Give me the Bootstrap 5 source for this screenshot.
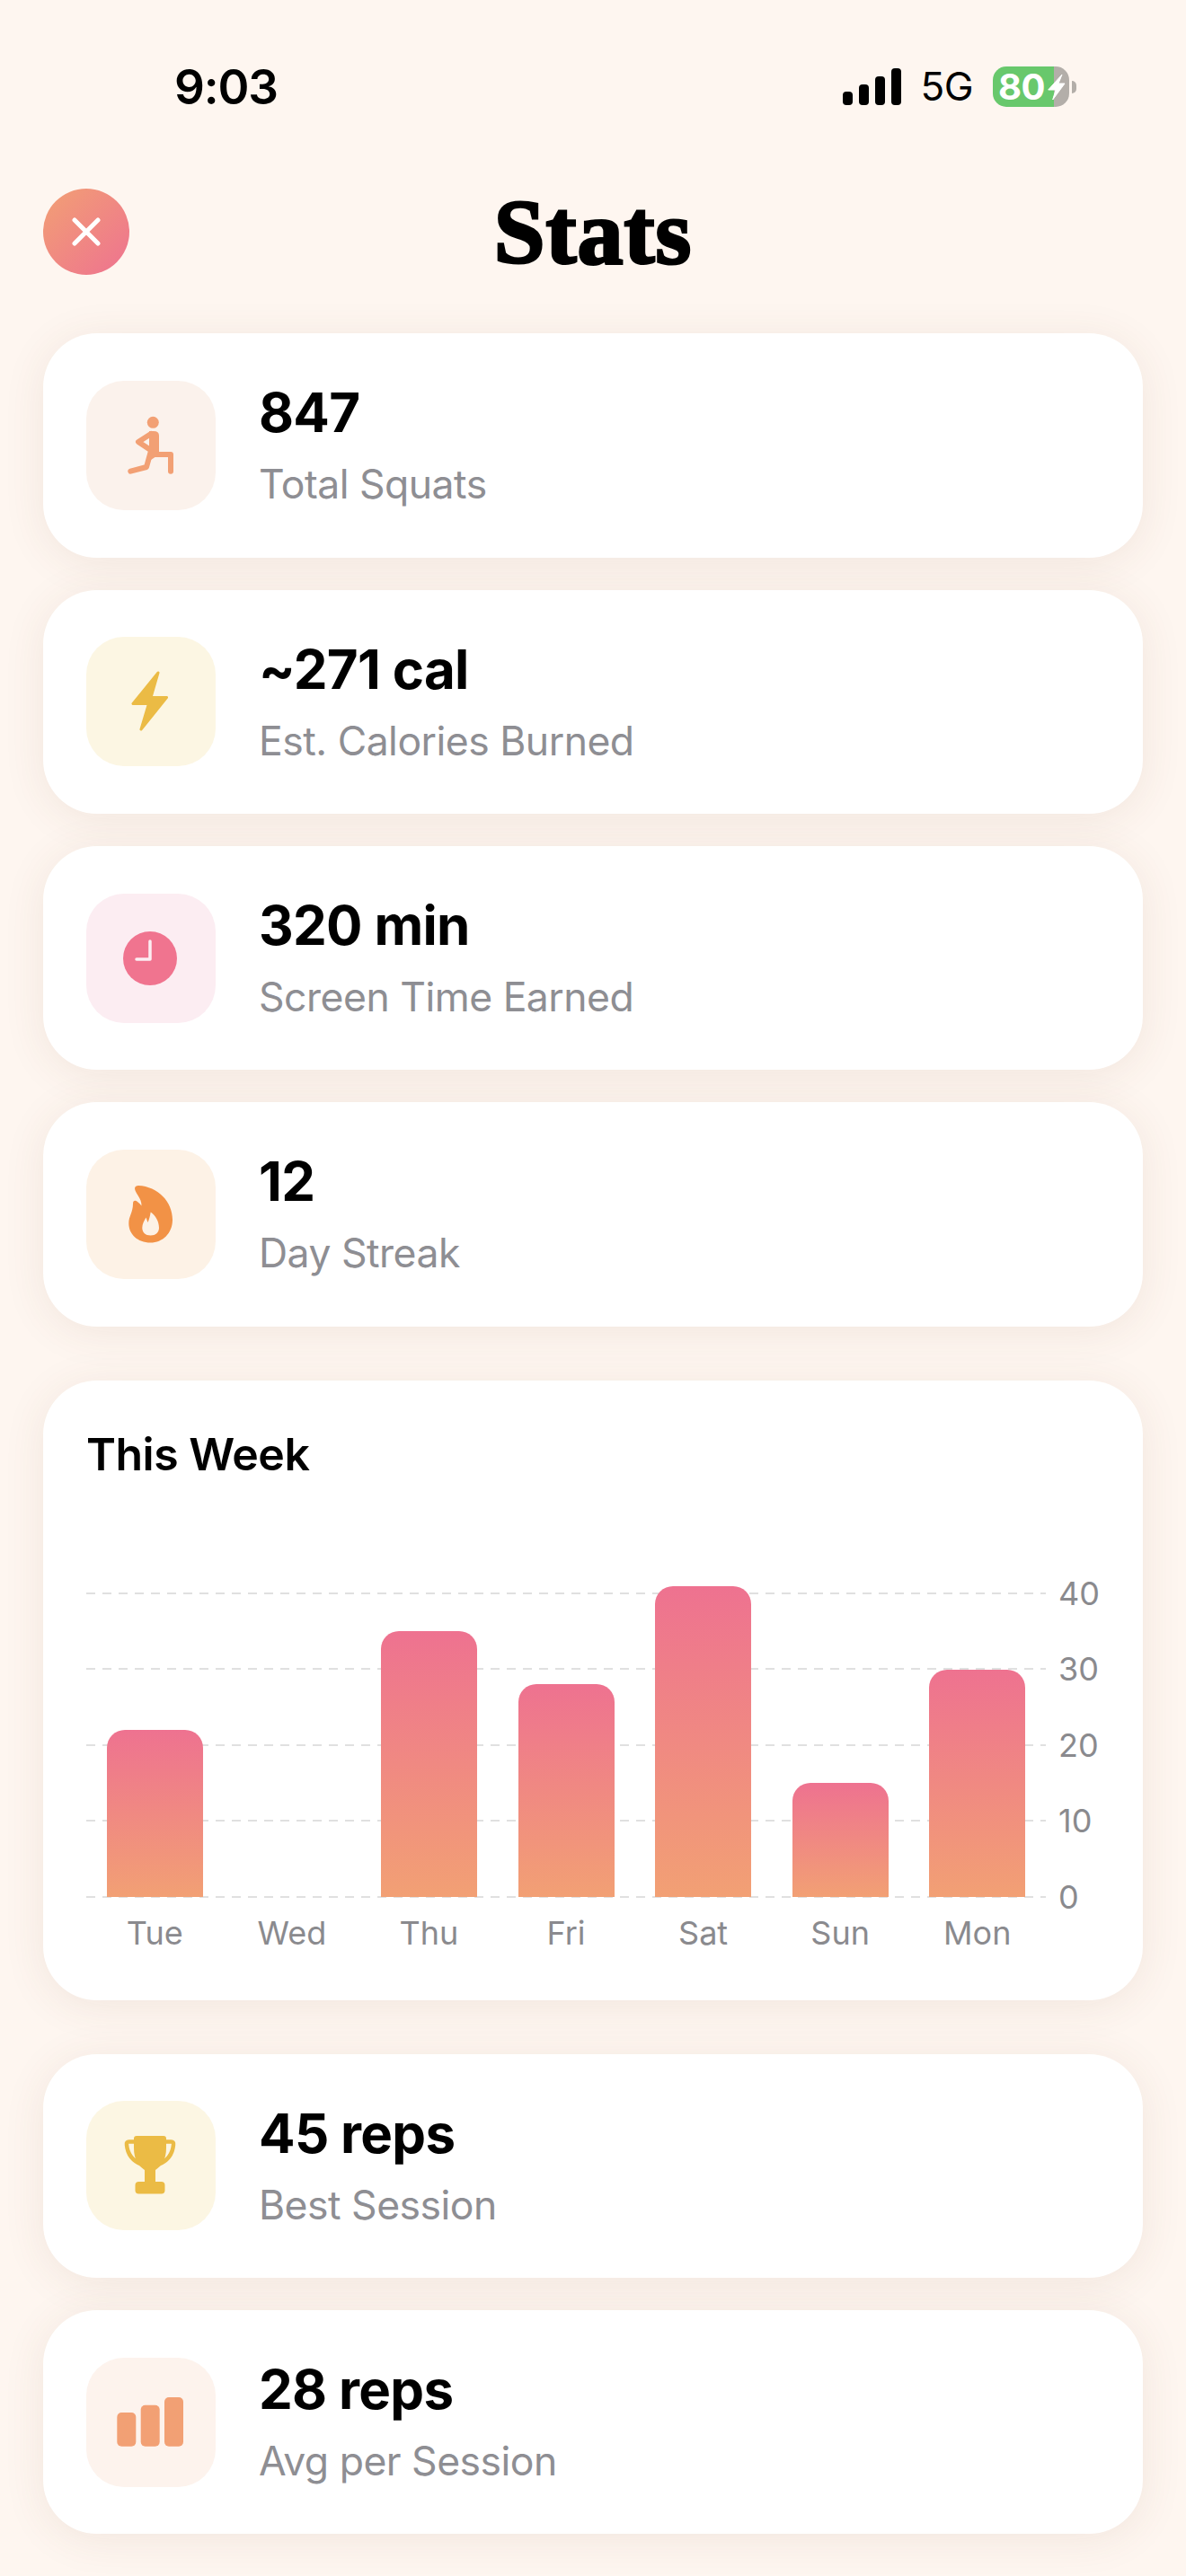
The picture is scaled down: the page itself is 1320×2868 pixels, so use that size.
<!DOCTYPE html>
<html lang="en">
<head>
    <meta charset="UTF-8">
    <meta name="viewport" content="width=device-width, initial-scale=1.0">
    <title>Stats</title>
    <link href="https://cdn.jsdelivr.net/npm/bootstrap@5.3.0/dist/css/bootstrap.min.css" rel="stylesheet">
    <style>
        body { background: #fef6f0; font-family: Inter, "Liberation Sans", sans-serif; color: #000; width: 1320px; min-height: 2868px; }
        .status-row { height: 192px; padding: 74px 122px 0 194px; }
        .status-time { font-size: 53px; font-weight: 600; line-height: 47px; letter-spacing: -1.2px; }
        .status-net { font-size: 44px; line-height: 45px; margin: 0 22px 0 21px; letter-spacing: -.5px; }
        .signal-bars { width: 65px; height: 41px; margin-top: 2px; }
        .signal-bars span { width: 11px; background: #000; border-radius: 4px; }
        .battery-body { width: 85px; height: 45px; border-radius: 15px; background: linear-gradient(90deg, #68c86c 80%, #b3aea9 80%); color: #fff; font-size: 40px; font-weight: 700; line-height: 45px; padding-left: 6px; letter-spacing: -.5px; }
        .battery-bolt { position: absolute; left: 0; top: 0; }
        .battery-nub { width: 5px; height: 14px; margin-left: 3px; background: #b3aea9; border-radius: 0 5px 5px 0; }
        .nav-row { height: 179.330px; padding: 18px 48px 0; position: relative; }
        .close-btn { width: 96px; height: 96px; border-radius: 50%; border: 0; padding: 0; background: linear-gradient(135deg, #f2a074, #ee7290); }
        .nav-title { position: absolute; left: 0; right: 0; top: 7px; margin: 0; text-align: center; font-family: "Liberation Serif", serif; font-weight: 700; font-size: 102px; line-height: 120px; letter-spacing: 1px; -webkit-text-stroke: 3px #000; }
        .page-stack { padding: 0 48px; gap: 36px; }
        .stat-card { border: 0; border-radius: 60px; background: #fff; box-shadow: 0 6px 48px rgba(110, 70, 40, .09); }
        .stat-row { height: 249.330px; padding: 0 48px; gap: 48px; }
        .icon-box { width: 144px; height: 144px; border-radius: 42px; flex-shrink: 0; }
        .tint-peach { background: #fbf2ec; }
        .tint-yellow { background: #fcf6e3; }
        .tint-pink { background: #fcedf2; }
        .tint-orange { background: #fdf2e6; }
        .tint-soft { background: #fdf3ed; }
        .stat-text { margin-top: -2px; }
        .stat-value { font-size: 60px; font-weight: 700; line-height: 72px; letter-spacing: -.7px; }
        .stat-label { font-size: 44.500px; line-height: 54px; color: #8e8e93; margin-top: 17px; letter-spacing: -.5px; }
        .chart-card { height: 690px; padding: 50px 48px 0; margin: 24px 0; }
        .chart-title { font-size: 50px; font-weight: 600; line-height: 64px; margin: 0; letter-spacing: -.5px; }
        .chart-plot { position: relative; height: 338px; width: 1068px; margin-top: 123px; }
        .chart-lines { position: absolute; inset: 0; width: 1140px; }
        .chart-line { height: 0; gap: 14px; }
        .chart-line i { display: block; width: 1068px; height: 2px; background: repeating-linear-gradient(90deg, #e0e0e0 0 10px, transparent 10px 18px); }
        .chart-line span { font-size: 36px; line-height: 40px; color: #8a8a8e; }
        .chart-bars { position: relative; height: 100%; }
        .bar-slot { flex: 1 1 0; }
        .chart-bar { width: 107px; border-radius: 20px 20px 0 0; background: linear-gradient(180deg, #ee7290, #f2a074); }
        .chart-days { width: 1068px; margin-top: 18px; }
        .chart-days span { flex: 1 1 0; text-align: center; font-size: 36px; line-height: 44px; color: #8a8a8e; }
    </style>
</head>
<body>
    <div class="status-row d-flex justify-content-between align-items-start">
        <div class="status-time">9:03</div>
        <div class="d-flex align-items-start">
            <div class="signal-bars d-flex justify-content-between align-items-end">
                <span style="height: 15px"></span>
                <span style="height: 23px"></span>
                <span style="height: 32px"></span>
                <span style="height: 41px"></span>
            </div>
            <div class="status-net">5G</div>
            <div class="battery-body position-relative">80
                <svg class="battery-bolt" width="85" height="45" viewBox="0 0 85 45"><path d="M77 9 61.700 26H70L66.700 37 80 19H73z" fill="#fff" stroke="#fff" stroke-linejoin="round"/></svg>
            </div>
            <div class="battery-nub align-self-center"></div>
        </div>
    </div>

    <div class="nav-row">
        <button class="close-btn d-flex align-items-center justify-content-center" aria-label="Close">
            <svg width="32" height="32" viewBox="0 0 32 32"><path d="M3 3 29 29M29 3 3 29" stroke="#fff" stroke-width="5" stroke-linecap="round"/></svg>
        </button>
        <h1 class="nav-title">Stats</h1>
    </div>

    <div class="page-stack d-flex flex-column">
        <div class="card stat-card">
            <div class="stat-row d-flex align-items-center">
                <div class="icon-box tint-peach">
                    <svg width="144" height="144" viewBox="0 0 144 144" fill="none" stroke="#f2a074" stroke-width="6" stroke-linecap="round" stroke-linejoin="round">
                        <circle cx="74.3" cy="46.3" r="6.5" fill="#f2a074" stroke="none"/>
                        <path d="M70 56h5q6 0 6 5v21L66 92l4-16z" fill="#f2a074" stroke="none"/>
                        <path d="M73 82h21v18.7M72 78l-5 18-17.700 4.700M72 59 58 68l12 8"/>
                    </svg>
                </div>
                <div class="stat-text">
                    <div class="stat-value">847</div>
                    <div class="stat-label">Total Squats</div>
                </div>
            </div>
        </div>

        <div class="card stat-card">
            <div class="stat-row d-flex align-items-center">
                <div class="icon-box tint-yellow">
                    <svg width="144" height="144" viewBox="0 0 144 144"><path d="M80 40 52 74.500h17.500L61 103 89.500 67.500H72z" fill="#ebbb45" stroke="#ebbb45" stroke-width="3" stroke-linejoin="round"/></svg>
                </div>
                <div class="stat-text">
                    <div class="stat-value">~271 cal</div>
                    <div class="stat-label">Est. Calories Burned</div>
                </div>
            </div>
        </div>

        <div class="card stat-card">
            <div class="stat-row d-flex align-items-center">
                <div class="icon-box tint-pink">
                    <svg width="144" height="144" viewBox="0 0 144 144"><circle cx="71" cy="72" r="30" fill="#f0748f"/><path d="M71 53v20H56" fill="none" stroke="#fcedf2" stroke-width="3.500" stroke-linecap="round" stroke-linejoin="round"/></svg>
                </div>
                <div class="stat-text">
                    <div class="stat-value">320 min</div>
                    <div class="stat-label">Screen Time Earned</div>
                </div>
            </div>
        </div>

        <div class="card stat-card">
            <div class="stat-row d-flex align-items-center">
                <div class="icon-box tint-orange">
                    <svg width="144" height="144" viewBox="0 0 144 144"><path fill="#f29246" fill-rule="evenodd" d="M54 43C54 41 56 40 58 40 80 41 96 58 96 78 96 93 85 103.500 71.500 103.500 57 103.500 47.300 94 47.300 82 47.300 74 52 70 52 60 52 56 55 56 57 58 59 59.500 60.500 61 61.500 62.500 62 54 54 48 54 43ZM71.700 69.500C77 73 81 80 81 87 81 92 77 95.500 71.700 95.500 66 95.500 62.300 92 62.300 87 62.300 83 64.500 79 66.500 75.500L68.500 81C70 78 71 74 71.700 69.500Z"/></svg>
                </div>
                <div class="stat-text">
                    <div class="stat-value">12</div>
                    <div class="stat-label">Day Streak</div>
                </div>
            </div>
        </div>

        <div class="card stat-card chart-card">
            <h2 class="chart-title">This Week</h2>
            <div class="chart-plot">
                <div class="chart-lines d-flex flex-column justify-content-between">
                    <div class="chart-line d-flex align-items-center"><i></i><span>40</span></div>
                    <div class="chart-line d-flex align-items-center"><i></i><span>30</span></div>
                    <div class="chart-line d-flex align-items-center"><i></i><span>20</span></div>
                    <div class="chart-line d-flex align-items-center"><i></i><span>10</span></div>
                    <div class="chart-line d-flex align-items-center"><i></i><span>0</span></div>
                </div>
                <div class="chart-bars d-flex align-items-end">
                    <div class="bar-slot d-flex justify-content-center"><div class="chart-bar" style="height: 186px"></div></div>
                    <div class="bar-slot d-flex justify-content-center"></div>
                    <div class="bar-slot d-flex justify-content-center"><div class="chart-bar" style="height: 296px"></div></div>
                    <div class="bar-slot d-flex justify-content-center"><div class="chart-bar" style="height: 237px"></div></div>
                    <div class="bar-slot d-flex justify-content-center"><div class="chart-bar" style="height: 346px"></div></div>
                    <div class="bar-slot d-flex justify-content-center"><div class="chart-bar" style="height: 127px"></div></div>
                    <div class="bar-slot d-flex justify-content-center"><div class="chart-bar" style="height: 253px"></div></div>
                </div>
            </div>
            <div class="chart-days d-flex">
                <span>Tue</span><span>Wed</span><span>Thu</span><span>Fri</span><span>Sat</span><span>Sun</span><span>Mon</span>
            </div>
        </div>

        <div class="card stat-card">
            <div class="stat-row d-flex align-items-center">
                <div class="icon-box tint-yellow">
                    <svg width="144" height="144" viewBox="0 0 144 144" fill="#ebbb45">
                        <path d="M56 39H86Q89 39 89 42V52C89 66 84 72 77 77V91H65V77C58 72 53 66 53 52V42Q53 39 56 39Z"/>
                        <path d="M54 45.500H47.500Q44.500 45.500 45 49C46 60 52 67 62 71M88 45.500H94.500Q97.500 45.500 97 49C96 60 90 67 80 71" fill="none" stroke="#ebbb45" stroke-width="4.500"/>
                        <rect x="54.500" y="90" width="33" height="13.500" rx="4"/>
                    </svg>
                </div>
                <div class="stat-text">
                    <div class="stat-value">45 reps</div>
                    <div class="stat-label">Best Session</div>
                </div>
            </div>
        </div>

        <div class="card stat-card">
            <div class="stat-row d-flex align-items-center">
                <div class="icon-box tint-soft">
                    <svg width="144" height="144" viewBox="0 0 144 144" fill="#f2a074">
                        <rect x="34.300" y="61" width="21" height="37.700" rx="5"/>
                        <rect x="60.700" y="52.700" width="21" height="46" rx="5"/>
                        <rect x="87" y="44" width="21" height="54.700" rx="5"/>
                    </svg>
                </div>
                <div class="stat-text">
                    <div class="stat-value">28 reps</div>
                    <div class="stat-label">Avg per Session</div>
                </div>
            </div>
        </div>
    </div>
    <script src="https://cdn.jsdelivr.net/npm/bootstrap@5.3.0/dist/js/bootstrap.bundle.min.js"></script>
</body>
</html>
